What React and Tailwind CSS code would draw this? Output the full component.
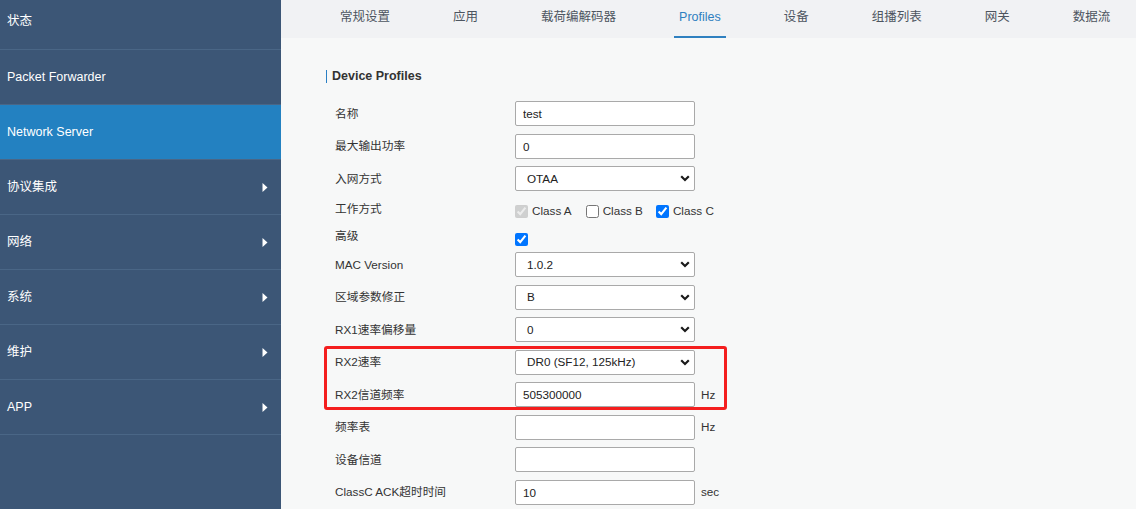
import React from 'react';

const menu = [
    { label: '状态' },
    { label: 'Packet Forwarder' },
    { label: 'Network Server', active: true },
    { label: '协议集成', arrow: true },
    { label: '网络', arrow: true },
    { label: '系统', arrow: true },
    { label: '维护', arrow: true },
    { label: 'APP', arrow: true },
];

const tabs = ['常规设置', '应用', '载荷编解码器', 'Profiles', '设备', '组播列表', '网关', '数据流'];

const Caret = () => (
    <svg width="6" height="9" viewBox="0 0 6 9">
        <path d="M0.5 0 L5.5 4.5 L0.5 9 Z" fill="#ffffff" />
    </svg>
);

const TextInput = ({ value }) => (
    <input
        readOnly
        value={value}
        className="w-[180px] h-[25px] border border-[#a9a9a9] rounded-[2px] bg-white pl-[7px] text-[#222] outline-none"
    />
);

const Select = ({ value }) => (
    <div className="w-[180px] h-[25px] border border-[#a9a9a9] rounded-[2px] bg-white flex items-center justify-between pl-[11px] pr-[4px] text-[#222]">
        <span>{value}</span>
        <svg width="10" height="7" viewBox="0 0 10 7">
            <path d="M1.2 1.3 L5 5 L8.8 1.3" stroke="#1a1a1a" strokeWidth="2.2" fill="none" />
        </svg>
    </div>
);

const Row = ({ label, unit, children }) => (
    <div className="flex items-center h-[25px]">
        <div className="w-[180px] text-[#333]">{label}</div>
        {children}
        {unit && <span className="ml-[6px] text-[#333]">{unit}</span>}
    </div>
);

const App = () => {
    return (
        <div className="flex w-[1136px] h-[509px] overflow-hidden font-['Liberation_Sans','Noto_Sans_CJK_SC',sans-serif]">
            {/* Sidebar */}
            <div className="w-[281px] shrink-0 bg-[#3c5676] flex flex-col text-white text-[12.5px]">
                {menu.map((m, i) => (
                    <div
                        key={m.label}
                        className={`flex items-center justify-between pl-[7px] pr-[13px] border-b border-[#4a6686] ${i === 0 ? 'h-[50px] pb-[7px]' : 'h-[55px]'} ${m.active ? 'bg-[#2381c1]' : ''}`}
                    >
                        <span>{m.label}</span>
                        {m.arrow && <Caret />}
                    </div>
                ))}
            </div>

            {/* Main */}
            <div className="flex-1 flex flex-col bg-[#f7f8f8]">
                <div className="h-[38px] bg-[#f1f2f4] flex items-stretch pl-[54px] gap-[53px] text-[12.5px]">
                    {tabs.map((t) => (
                        <div
                            key={t}
                            className={`flex items-center px-[5px] pb-[1px] border-b-2 ${t === 'Profiles' ? 'border-[#2f80c0] text-[#2f80c0]' : 'border-transparent text-[#4d5560]'}`}
                        >
                            {t}
                        </div>
                    ))}
                </div>

                <div className="pl-[45px]">
                    <div className="flex items-center h-[13px] mt-[32px]">
                        <div className="w-px h-[13px] bg-[#2a7fc4]" />
                        <span className="ml-[5px] font-bold text-[12.5px] text-[#333]">Device Profiles</span>
                    </div>

                    <div className="ml-[9px] mt-[18px] w-[392px] flex flex-col gap-[7.5px] text-[11.7px]">
                        <Row label="名称"><TextInput value="test" /></Row>
                        <Row label="最大输出功率"><TextInput value="0" /></Row>
                        <Row label="入网方式"><Select value="OTAA" /></Row>

                        <div className="flex items-start h-[20px]">
                            <div className="w-[180px] leading-[20px] text-[#333]">工作方式</div>
                            <div className="flex items-center mt-[6px] h-[13px] text-[#333]">
                                <input type="checkbox" checked disabled readOnly className="w-[13px] h-[13px] m-0" />
                                <span className="ml-[4px]">Class A</span>
                                <input type="checkbox" readOnly className="w-[13px] h-[13px] ml-[14px]" />
                                <span className="ml-[4px]">Class B</span>
                                <input type="checkbox" checked readOnly className="w-[13px] h-[13px] ml-[13px]" />
                                <span className="ml-[4px]">Class C</span>
                            </div>
                        </div>

                        <div className="flex items-start h-[18.5px]">
                            <div className="w-[180px] leading-[20px] text-[#333]">高级</div>
                            <input type="checkbox" checked readOnly className="w-[13px] h-[13px] mt-[6.5px]" />
                        </div>

                        <Row label="MAC Version"><Select value="1.0.2" /></Row>
                        <Row label="区域参数修正"><Select value="B" /></Row>
                        <Row label="RX1速率偏移量"><Select value="0" /></Row>

                        <div className="relative flex flex-col gap-[7.5px]">
                            <Row label="RX2速率"><Select value="DR0 (SF12, 125kHz)" /></Row>
                            <Row label="RX2信道频率" unit="Hz"><TextInput value="505300000" /></Row>
                            {/* annotation box */}
                            <div className="absolute -top-[3.5px] -bottom-[3px] -left-[11px] right-0 border-[3px] border-[#f41e1e] rounded-[3px] pointer-events-none" />
                        </div>

                        <Row label="频率表" unit="Hz"><TextInput value="" /></Row>
                        <Row label="设备信道"><TextInput value="" /></Row>
                        <Row label="ClassC ACK超时时间" unit="sec"><TextInput value="10" /></Row>
                    </div>
                </div>
            </div>
        </div>
    );
};

export default App;
